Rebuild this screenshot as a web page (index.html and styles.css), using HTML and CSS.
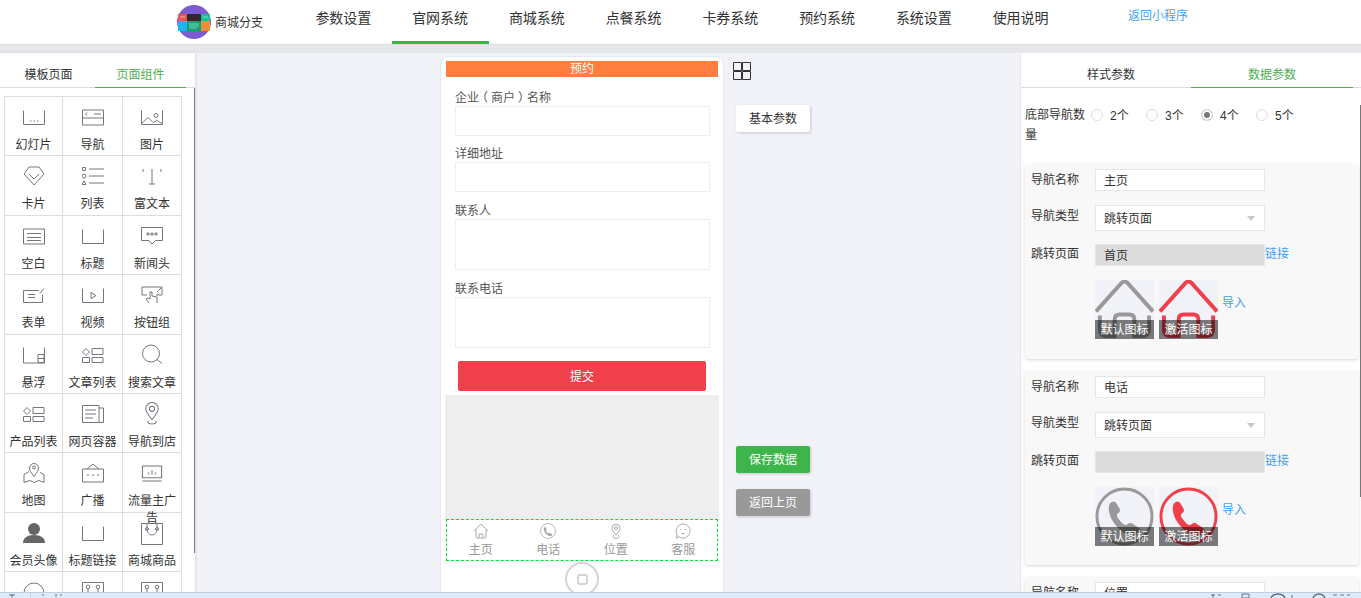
FILE: index.html
```html
<!DOCTYPE html>
<html lang="zh-CN">
<head>
  <meta charset="UTF-8">
  <title>商城分支</title>
  <link rel="stylesheet" href="styles.css">
</head>
<body>
  <svg class="sprites" width="0" height="0">
    <symbol id="i-home" viewBox="0 0 60 60"><path d="M1 32 27 3q3-3 6 0L59 32M5 36v14q0 7 7 7h8V40q0-5 5-5h10q5 0 5 5v17h8q7 0 7-7V36" fill="none" stroke="currentColor" stroke-width="4"/></symbol>
    <symbol id="i-phone" viewBox="0 0 60 60"><circle cx="30" cy="30" r="28" fill="none" stroke="currentColor" stroke-width="3"/><path d="M15 17c3-3 5-3 7 0l3 5c1 2 0 4-2 5-1 1-1 2 0 4 2 3 4 5 6 7 2 1 3 1 4 0 2-2 4-2 6 0l6 4c2 2 2 3 0 5-3 3-8 3-13 1-6-3-11-8-15-15-3-6-4-12-2-16z" fill="currentColor"/></symbol>
  </svg>

  <!-- top nav -->
  <header class="topbar">
    <div class="brand">
      <svg class="brand-logo" viewBox="0 0 34 34">
        <circle cx="17" cy="17" r="17" fill="#7d5bd0"/>
        <rect x="1" y="9" width="9" height="7" fill="#ef5350"/>
        <rect x="10" y="9" width="14" height="7" fill="#2b2b2b"/>
        <rect x="24" y="9" width="9" height="7" fill="#26b99a"/>
        <rect x="1" y="16" width="9" height="10" fill="#1eb6ea"/>
        <rect x="10" y="16" width="14" height="10" fill="#0aa572"/>
        <rect x="24" y="16" width="9" height="10" fill="#f28c38"/>
        <path d="M12 19h10M12 21h10M12 23h8M3 12h5M26 12h5" stroke="#cfeee2" stroke-width=".6"/>
      </svg>
      <span>商城分支</span>
    </div>
    <nav class="nav">
      <a class="nav-item">参数设置</a>
      <a class="nav-item active">官网系统</a>
      <a class="nav-item">商城系统</a>
      <a class="nav-item">点餐系统</a>
      <a class="nav-item">卡券系统</a>
      <a class="nav-item">预约系统</a>
      <a class="nav-item">系统设置</a>
      <a class="nav-item">使用说明</a>
    </nav>
    <a class="back-mini">返回小程序</a>
  </header>

  <div class="main">
    <!-- left: components -->
    <aside class="left">
      <div class="tabs left-tabs">
        <span class="tab">模板页面</span>
        <span class="tab on">页面组件</span>
      </div>
      <div class="grid">
        <div class="cell"><svg class="ic" viewBox="0 0 22 16"><path d="M.5 1v14h21V1M7 11.500h1.500M10.500 11.500H12M14 11.500h1.500"/></svg><span>幻灯片</span></div>
        <div class="cell"><svg class="ic" viewBox="0 0 22 16"><path d="M.5.500h21v15H.5zM.5 8.500h21M5 3 3.500 4.500 5 6M12 4.500h7"/></svg><span>导航</span></div>
        <div class="cell"><svg class="ic" viewBox="0 0 22 16"><path d="M.5 1v14h21V1M.5 14 7 8l5 5 4-2 5 3"/><circle cx="15" cy="6" r="2"/></svg><span>图片</span></div>
        <div class="cell"><svg class="ic ic-mid" viewBox="0 0 22 20"><path d="M6 1h10l5 7-10 11L1 8zM6 8l5 5 5-5"/></svg><span>卡片</span></div>
        <div class="cell"><svg class="ic ic-mid" viewBox="0 0 22 18"><path d="M.5.500h3v3h-3zM7 2h15M7 9h15M7 16h15"/><circle cx="2" cy="9" r="2"/><path d="M2 14l2 3.500H0z"/></svg><span>列表</span></div>
        <div class="cell"><svg class="ic ic-mid" viewBox="0 0 22 18"><path d="M11 2v15M8 17h6M2 2v3M20 2v3"/></svg><span>富文本</span></div>
        <div class="cell"><svg class="ic" viewBox="0 0 22 16"><path d="M.5.500h21v15H.5zM4 5h14M4 9h14M4 12h14"/></svg><span>空白</span></div>
        <div class="cell"><svg class="ic" viewBox="0 0 22 16"><path d="M.5 1v14h21V1"/></svg><span>标题</span></div>
        <div class="cell"><svg class="ic ic-mid" viewBox="0 0 22 18"><path d="M.5.500h21v13h-7L11 17l-3-3.500H.5zM6 6h2v2H6zM10 6h2v2h-2zM14 6h2v2h-2z"/></svg><span>新闻头</span></div>
        <div class="cell"><svg class="ic" viewBox="0 0 22 16"><path d="M16 3H.5v12h19V7M5 7h7M5 10h7M17 6l4-5"/></svg><span>表单</span></div>
        <div class="cell"><svg class="ic" viewBox="0 0 22 16"><path d="M.5 1v14h21V1M9 5l5 3-5 3z"/></svg><span>视频</span></div>
        <div class="cell"><svg class="ic ic-mid" viewBox="0 0 22 18"><path d="M6 9H1V1h20v8h-6M8 17l-3-4 2-1 2 1V6h2v4l5 1v6M16 6l4-4"/></svg><span>按钮组</span></div>
        <div class="cell"><svg class="ic" viewBox="0 0 22 16"><path d="M.5 0v15.500h21V0M15 7h6v8h-6zM15 11h6"/></svg><span>悬浮</span></div>
        <div class="cell"><svg class="ic" viewBox="0 0 22 16"><path d="M4 1l3.500 3.500L4 8 .5 4.500zM.5 10h7v5h-7zM10 1h11v6H10zM10 10h11v5H10z"/></svg><span>文章列表</span></div>
        <div class="cell"><svg class="ic ic-big" viewBox="0 0 22 20"><circle cx="10" cy="9" r="8.500"/><path d="M16 15l5 4"/></svg><span>搜索文章</span></div>
        <div class="cell"><svg class="ic" viewBox="0 0 22 16"><path d="M4 1l3.500 3.500L4 8 .5 4.500zM.5 10h7v5h-7zM10 1h11v6H10zM10 10h11v5H10z"/></svg><span>产品列表</span></div>
        <div class="cell"><svg class="ic ic-mid" viewBox="0 0 22 18"><path d="M.5.500H17v17H.5zM17 3h4.500v14.500H17M3 5h11M3 9h11M3 13h8"/></svg><span>网页容器</span></div>
        <div class="cell"><svg class="ic ic-big" viewBox="0 0 14 22"><path d="M7 17C3 12 1 9 1 6.500a6 6 0 0 1 12 0C13 9 11 12 7 17zM4 18c-3 2 1 3 3 3s6-1 3-3"/><circle cx="7" cy="6.500" r="2.500"/></svg><span>导航到店</span></div>
        <div class="cell"><svg class="ic ic-big" viewBox="0 0 22 22"><path d="M11 15c-3-4-4.500-6-4.500-8.500a4.500 4.500 0 0 1 9 0C15.500 9 14 11 11 15zM6 10 1 13v8l6-2 4 2 5-2 5 2v-8l-4-2"/><circle cx="11" cy="6" r="1.500"/></svg><span>地图</span></div>
        <div class="cell"><svg class="ic ic-mid" viewBox="0 0 22 20"><path d="M.5 6h21v13H.5zM5 6l6-5 6 5M5 12h2M10 12h2M15 12h2"/></svg><span>广播</span></div>
        <div class="cell"><svg class="ic" viewBox="0 0 20 16"><path d="M1 1v11h18V1H1M1 15h18M7 9V7M10 9V5M13 9V7"/></svg><span>流量主广告</span></div>
        <div class="cell"><svg class="ic ic-fill" viewBox="0 0 22 20"><circle cx="11" cy="6" r="6"/><path d="M0 20c0-5 4-8 11-8s11 3 11 8z"/></svg><span>会员头像</span></div>
        <div class="cell"><svg class="ic" viewBox="0 0 22 16"><path d="M.5 1v14h21V1"/></svg><span>标题链接</span></div>
        <div class="cell"><svg class="ic ic-tall" viewBox="0 0 22 22"><path d="M.5.500h21v21H.5zM6 1v5c0 8 10 8 10 0V1"/><circle cx="6" cy="6" r="1.500"/><circle cx="16" cy="6" r="1.500"/></svg><span>商城商品</span></div>
        <div class="cell"><svg class="ic ic-tall" viewBox="0 0 22 22"><circle cx="11" cy="11" r="10"/></svg></div>
        <div class="cell"><svg class="ic ic-tall" viewBox="0 0 22 22"><path d="M.5.500h21v21H.5zM6 7v5M16 7v5"/><circle cx="6" cy="5" r="1.800"/><circle cx="16" cy="5" r="1.800"/></svg></div>
        <div class="cell"><svg class="ic ic-tall" viewBox="0 0 22 22"><path d="M.5.500h21v21H.5zM6 7v5M16 7v5"/><circle cx="6" cy="5" r="1.800"/><circle cx="16" cy="5" r="1.800"/></svg></div>
      </div>
      <div class="left-scroll"></div>
    </aside>

    <!-- phone preview -->
    <section class="stage">
      <div class="phone">
        <div class="phone-title">预约</div>
        <form class="book">
          <label>企业<span class="paren">（</span>商户<span class="paren">）</span>名称</label>
          <div class="box"></div>
          <label>详细地址</label>
          <div class="box box-2"></div>
          <label>联系人</label>
          <div class="box box-tall"></div>
          <label>联系电话</label>
          <div class="box box-tall"></div>
          <div class="submit">提交</div>
        </form>
        <div class="phone-gray"></div>
        <div class="tabbar">
          <div class="tabbar-item">
            <svg viewBox="0 0 16 16"><path d="M1 8l6.300-6.300q.7-.7 1.400 0L15 8M3 6.500V14q0 1 1 1h8q1 0 1-1V6.500M6 15v-4h4v4" fill="none" stroke="currentColor"/></svg>
            <span>主页</span>
          </div>
          <div class="tabbar-item">
            <svg viewBox="0 0 60 60"><use href="#i-phone"/></svg>
            <span>电话</span>
          </div>
          <div class="tabbar-item">
            <svg viewBox="0 0 14 16"><path d="M7 12C4.500 9 3 7 3 5a4 4 0 0 1 8 0c0 2-1.500 4-4 7zM4.500 12.500C2.500 14 5 15.500 7 15.500s4.500-1.500 2.500-3" fill="none" stroke="currentColor"/><circle cx="7" cy="5" r="1.500" fill="none" stroke="currentColor"/></svg>
            <span>位置</span>
          </div>
          <div class="tabbar-item">
            <svg viewBox="0 0 16 16"><path d="M8 1a7 7 0 1 1-4 12.700L1.500 15l.6-3.500A7 7 0 0 1 8 1z" fill="none" stroke="currentColor"/><path d="M5 6.500h1M10 6.500h1M6 10c1 1 3 1 4 0" fill="none" stroke="currentColor"/></svg>
            <span>客服</span>
          </div>
        </div>
        <div class="home-btn"><i></i></div>
      </div>

      <div class="side-tools">
        <svg class="qr" viewBox="0 0 18 18"><path d="M.5.500h8v8h-8zM9.500.500h8v8h-8zM.5 9.500h8v8h-8zM9.500 9.500h8v8h-8z"/></svg>
        <a class="tool-btn">基本参数</a>
        <a class="tool-btn green">保存数据</a>
        <a class="tool-btn grey">返回上页</a>
      </div>
    </section>

    <!-- right: params -->
    <aside class="right">
      <div class="tabs right-tabs">
        <span class="tab">样式参数</span>
        <span class="tab on">数据参数</span>
      </div>
      <div class="right-body">
        <div class="count-row">
          <div class="count-label">底部导航数量</div>
          <div class="radios">
            <span class="radio"><i></i>2个</span>
            <span class="radio"><i></i>3个</span>
            <span class="radio checked"><i></i>4个</span>
            <span class="radio"><i></i>5个</span>
          </div>
        </div>

        <div class="card">
          <div class="row"><label>导航名称</label><div class="field">主页</div></div>
          <div class="row row-type"><label>导航类型</label><div class="field select">跳转页面</div></div>
          <div class="row row-link"><label>跳转页面</label><div class="field off">首页</div><a class="link">链接</a></div>
          <div class="icons-row">
            <div class="thumb grey-ic"><svg viewBox="0 0 60 60"><use href="#i-home"/></svg><span>默认图标</span></div>
            <div class="thumb red-ic"><svg viewBox="0 0 60 60"><use href="#i-home"/></svg><span>激活图标</span></div>
            <a class="link">导入</a>
          </div>
        </div>

        <div class="card">
          <div class="row"><label>导航名称</label><div class="field">电话</div></div>
          <div class="row row-type"><label>导航类型</label><div class="field select">跳转页面</div></div>
          <div class="row row-link"><label>跳转页面</label><div class="field off"></div><a class="link">链接</a></div>
          <div class="icons-row">
            <div class="thumb grey-ic"><svg viewBox="0 0 60 60"><use href="#i-phone"/></svg><span>默认图标</span></div>
            <div class="thumb red-ic"><svg viewBox="0 0 60 60"><use href="#i-phone"/></svg><span>激活图标</span></div>
            <a class="link">导入</a>
          </div>
        </div>

        <div class="card">
          <div class="row"><label>导航名称</label><div class="field">位置</div></div>
        </div>
      </div>
      <div class="right-scroll"></div>
    </aside>
  </div>

  <!-- browser status strip, only its top edge is in view -->
  <div class="statusbar">
    <div class="status-divider"></div>
    <svg class="status-marks" viewBox="0 0 1361 6" preserveAspectRatio="none">
      <path d="M9 2h6M12 1v4M42 2h2M56 1v3M60 2h2M1211 2h4M1213 1v4M1218 2h3M1242 1h7v4h-7zM1292 2v3M1333 2h4M1340 2h4M1347 2h3" fill="none" stroke="#6b7480"/>
      <path d="M1271 6a7 5 0 0 1 14 0M1313 6a6 5 0 0 1 12 0" fill="none" stroke="#5f6b78" stroke-width="1.500"/>
    </svg>
  </div>
</body>
</html>
```
FILE: styles.css
```css
* {
  margin: 0;
  padding: 0;
  box-sizing: border-box;
}

html, body {
  height: 100%;
  overflow: hidden;
}

body {
  font-family: "Liberation Sans", "Noto Sans CJK SC", sans-serif;
  font-size: 12px;
  color: #333;
  background: #e6e7ea;
}

.sprites {
  position: absolute;
}

/* top nav */
.topbar {
  display: flex;
  height: 45px;
  background: #fff;
  border-bottom: 1px solid #dcdcdc;
  padding-left: 177px;
}

.brand {
  display: flex;
  align-items: center;
  gap: 4px;
  width: 116px;
  height: 44px;
  padding-bottom: 1px;
}

.brand-logo {
  width: 34px;
  height: 34px;
}

.nav {
  display: flex;
  width: 776px;
  padding-left: 2px;
}

.nav-item {
  width: 97px;
  height: 44px;
  line-height: 37px;
  text-align: center;
  font-size: 14px;
}

.nav-item.active {
  border-bottom: 3px solid #3db54a;
}

.back-mini {
  line-height: 33px;
  color: #4a9ff0;
  margin-left: 59px;
}

.main {
  display: flex;
  height: 553px;
  margin-top: 8px;
}

/* left panel */
.left {
  position: relative;
  z-index: 1;
  width: 195px;
  height: 100%;
  background: #fff;
  box-shadow: 1px 0 3px rgba(0, 0, 0, 0.1);
  overflow: hidden;
}

.tabs {
  display: flex;
  height: 35px;
  border-bottom: 1px solid #dcdcdc;
}

.tab {
  text-align: center;
  line-height: 44px;
  height: 35px;
}

.tab.on {
  color: #4caf50;
  border-bottom: 1px solid #4caf50;
}

.left-tabs .tab {
  width: 97px;
}

.left-tabs .tab.on {
  width: 91px;
  margin-left: -2px;
}

.grid {
  display: grid;
  grid-template-columns: 58px 60px 59px;
  grid-auto-rows: 59.400px;
  width: 178px;
  margin: 8px 0 0 4px;
  border-top: 1px solid #ddd;
  border-left: 1px solid #ddd;
}

.cell {
  display: flex;
  flex-direction: column;
  align-items: center;
  border-right: 1px solid #ddd;
  border-bottom: 1px solid #ddd;
  padding-top: 12px;
  overflow: visible;
  line-height: 17px;
  text-align: center;
}

.cell span {
  margin-top: 11px;
  width: 100%;
}

.ic {
  width: 22px;
  height: 17px;
  flex-shrink: 0;
  fill: none;
  stroke: #77747f;
  stroke-width: 1;
}

.ic-mid {
  height: 20px;
  margin-top: -2px;
  margin-bottom: -1px;
}

.ic-big {
  height: 23px;
  margin-top: -4px;
  margin-bottom: -2px;
}

.ic-tall {
  width: 22px;
  height: 22px;
  margin-top: -2px;
  margin-bottom: -3px;
}

.ic-fill {
  fill: #666;
  stroke: none;
  height: 22px;
  margin-top: -3px;
  margin-bottom: -2px;
}

.left-scroll {
  position: absolute;
  left: 194px;
  top: 35px;
  width: 1px;
  height: 465px;
  background: #77787c;
}

/* centre */
.stage {
  display: flex;
  width: 825px;
  height: 100%;
  background: #f2f3f9;
  padding: 3px 0 0 245px;
}

.phone {
  width: 284px;
  height: 570px;
  background: #fff;
  border: 1px solid #e8e8ec;
  border-radius: 8px 8px 0 0;
  padding: 4px 4px 0 4px;
}

.phone-title {
  width: 272px;
  margin-left: 1px;
  height: 16px;
  line-height: 16px;
  text-align: center;
  color: #fff;
  background: #ff7f41;
}

.book {
  display: flex;
  flex-direction: column;
  height: 318px;
  padding: 12px 8px 0 10px;
}

.book label {
  height: 17px;
  line-height: 19px;
  color: #555;
}

/* fullwidth bracket, trimmed and centred in its 12px cell */
.paren {
  display: inline-block;
  width: 12px;
  text-align: center;
  font-feature-settings: "halt";
}

.box {
  width: 255px;
  height: 30px;
  border: 1px solid #eee;
  margin: 0 0 9px;
}

.box-2 {
  margin-bottom: 10px;
}

.box-tall {
  height: 51px;
  margin-bottom: 10px;
}

.submit {
  width: 248px;
  height: 30px;
  margin: 3px 0 0 3px;
  line-height: 32px;
  text-align: center;
  color: #fff;
  background: #f1404b;
  border-radius: 2px;
}

.phone-gray {
  width: 274px;
  height: 124px;
  background: #eee;
}

.tabbar {
  display: flex;
  width: 272px;
  height: 42px;
  margin-left: 1px;
  border: 1px dashed #00e81c;
  padding: 3px 0 0 0;
}

.tabbar-item {
  display: flex;
  flex-direction: column;
  align-items: center;
  width: 67.500px;
  color: #999;
  line-height: 14px;
}

.tabbar-item svg {
  width: 16px;
  height: 16px;
  color: #aaa;
  margin-bottom: 4px;
}

.home-btn {
  display: flex;
  align-items: center;
  justify-content: center;
  width: 34px;
  height: 34px;
  margin: 1px 0 0 120px;
  border: 2px solid #d4d4d4;
  border-radius: 50%;
}

.home-btn i {
  width: 11px;
  height: 11px;
  border: 2px solid #d4d4d4;
  border-radius: 3px;
}

.side-tools {
  display: flex;
  flex-direction: column;
  align-items: flex-start;
  padding: 6px 0 0 9px;
}

.qr {
  width: 18px;
  height: 18px;
  fill: none;
  stroke: #333;
  margin-bottom: 25px;
}

.tool-btn {
  width: 74px;
  height: 27px;
  margin-left: 3px;
  line-height: 28px;
  text-align: center;
  background: #fff;
  border-radius: 2px;
  box-shadow: 1px 1px 3px rgba(0, 0, 0, 0.18);
}

.tool-btn.green {
  margin-top: 314px;
  color: #fff;
  background: #3db54a;
}

.tool-btn.grey {
  margin-top: 16px;
  color: #fff;
  background: #999;
}

/* right panel */
.right {
  position: relative;
  flex: 1;
  height: 100%;
  background: #fff;
  border-left: 1px solid #e6e6ea;
  overflow: hidden;
}

.right-tabs .tab {
  width: 170px;
  padding-left: 10px;
}

.right-tabs .tab.on {
  width: 162px;
  padding-left: 0;
}

.right-tabs {
  height: 35px;
}

.right-body {
  padding: 17px 0 0 4px;
}

.count-row {
  display: flex;
  height: 59px;
}

.count-label {
  width: 66px;
  line-height: 20px;
}

.radios {
  display: flex;
  height: 19px;
  align-items: center;
}

.radio {
  display: flex;
  align-items: center;
  width: 55px;
}

.radio i {
  width: 12px;
  height: 12px;
  margin-right: 7px;
  border: 1px solid #ddd;
  border-radius: 50%;
  background: #fff;
}

.radio.checked i {
  background: #777;
  box-shadow: inset 0 0 0 2px #fff;
}

.card {
  width: 334px;
  height: 194.500px;
  margin: 0 0 12px 0;
  padding: 5px 0 0 6px;
  background: #f8f8f8;
  border-radius: 3px;
  box-shadow: 0 1px 3px rgba(0, 0, 0, 0.16);
}

.row {
  display: flex;
  align-items: flex-start;
  margin-bottom: 14px;
}

.row-type {
  margin-bottom: 13px;
}

.row label {
  width: 64px;
  height: 17px;
  line-height: 23px;
}

.row-link label {
  line-height: 21px;
}

.field {
  width: 170px;
  height: 22px;
  line-height: 22px;
  padding-left: 8px;
  background: #fff;
  border: 1px solid #e6e6e6;
}

.field.select {
  position: relative;
  height: 26px;
  line-height: 26px;
}

.field.select::after {
  content: "";
  position: absolute;
  right: 9px;
  top: 10px;
  border: 4px solid transparent;
  border-top: 5px solid #c8c8c8;
  border-bottom: 0;
}

.field.off {
  background: #dcdcdc;
}

.link {
  color: #4a9ff0;
}

.row-link .link {
  line-height: 20px;
}

.icons-row {
  display: flex;
  margin: 0 0 0 64px;
  gap: 5px;
}

.icons-row .link {
  margin: 13px 0 0 -1px;
}

.thumb {
  position: relative;
  width: 59px;
  height: 59px;
  background: #f2f3f9;
  overflow: hidden;
}

.thumb svg {
  display: block;
  width: 59px;
  height: 59px;
}

.thumb span {
  position: absolute;
  left: 0;
  right: 0;
  bottom: 0;
  height: 19px;
  line-height: 20px;
  text-align: center;
  color: #fff;
  background: rgba(0, 0, 0, 0.5);
}

.grey-ic {
  color: #999;
}

.red-ic {
  color: #f1404b;
}

.right-scroll {
  position: absolute;
  right: 0;
  top: 52px;
  width: 1px;
  height: 392px;
  background: #777;
}

.statusbar {
  position: fixed;
  z-index: 2;
  left: 0;
  right: 0;
  bottom: 0;
  height: 6px;
  background: #dfeafa;
  border-top: 1px solid #b9cfe8;
  overflow: hidden;
}

.status-divider {
  position: absolute;
  left: 30px;
  top: 0;
  width: 1px;
  height: 6px;
  background: #c3d3e6;
}

.status-marks {
  display: block;
  width: 100%;
  height: 6px;
}
```
